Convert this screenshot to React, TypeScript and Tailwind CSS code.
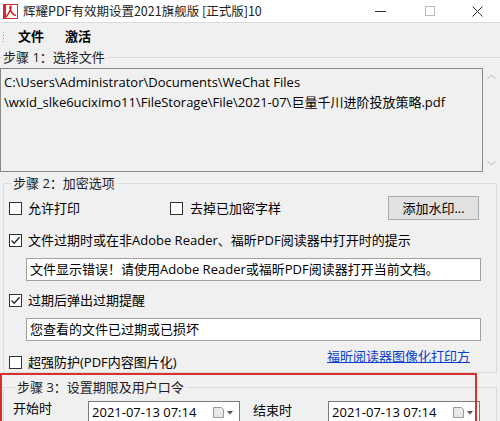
import { useState } from 'react';

function CheckBox({ checked, onChange }: { checked: boolean; onChange: () => void }) {
  return (
    <button
      type="button"
      onClick={onChange}
      className="w-[13px] h-[13px] shrink-0 border border-[#333] bg-white flex items-center justify-center"
    >
      {checked && (
        <svg width="11" height="11" viewBox="0 0 11 11">
          <path d="M1.5 5.5 L4.2 8.2 L9.5 2.2" fill="none" stroke="#222" strokeWidth="1.3" />
        </svg>
      )}
    </button>
  );
}

function DatePicker({ value }: { value: string }) {
  return (
    <div className="w-[152px] h-[23px] bg-white border border-[#7a7a7a] flex items-center pl-[3px] pr-[5px]">
      <span className="flex-1 text-[13px] leading-[15px] text-black">{value}</span>
      <svg width="22" height="13" viewBox="0 0 22 13">
        <path d="M1.5 1.5 H9.5 L11.5 3.5 V11.5 H1.5 Z" fill="#e8e8e8" stroke="#9a9a9a" />
        <path d="M15 5 L21 5 L18 8.5 Z" fill="#555" />
      </svg>
    </div>
  );
}

export default function App() {
  const [allowPrint, setAllowPrint] = useState(false);
  const [removeMark, setRemoveMark] = useState(false);
  const [tipOn, setTipOn] = useState(true);
  const [expireOn, setExpireOn] = useState(true);
  const [strong, setStrong] = useState(false);

  return (
    <div className="w-[500px] h-[421px] overflow-hidden relative bg-[#f0f0f0] text-black font-['Open_Sans','Noto_Sans_CJK_SC',sans-serif] text-[13px]">
      {/* title bar */}
      <div className="h-[23px] bg-white border-b border-[#dadada] flex items-center">
        <svg width="15" height="15" viewBox="0 0 15 15" className="ml-[3px]">
          <rect x="0.5" y="0.5" width="14" height="14" fill="#fff" stroke="#d42a2a" />
          <rect x="0" y="0" width="3" height="15" fill="#d42a2a" />
          <path d="M3 13 C6 9 8 5 8 3 C8 1.5 6.5 2 7 4.5 C7.5 7.5 10 11 13 11.5" fill="none" stroke="#d42a2a" strokeWidth="1.6" />
        </svg>
        <span className="ml-[5px] font-['Noto_Sans_CJK_SC',sans-serif] text-[12.5px] leading-[16px] text-[#222]">辉耀PDF有效期设置2021旗舰版 [正式版]10</span>
        <div className="ml-auto flex items-center h-full">
          <div className="w-[52px] flex justify-center">
            <div className="w-[11px] h-px bg-[#333]" />
          </div>
          <div className="w-[48px] flex justify-center">
            <div className="w-[10px] h-[10px] border border-[#bbb]" />
          </div>
          <div className="w-[46px] flex justify-center">
            <svg width="11" height="11" viewBox="0 0 11 11">
              <path d="M0.5 0.5 L10.5 10.5 M10.5 0.5 L0.5 10.5" stroke="#333" strokeWidth="1" />
            </svg>
          </div>
        </div>
      </div>

      {/* menu bar */}
      <div className="h-[27px] flex items-center">
        <div className="ml-[3px] flex flex-col gap-[2px]">
          <div className="w-px h-px bg-[#999]" />
          <div className="w-px h-px bg-[#999]" />
          <div className="w-px h-px bg-[#999]" />
          <div className="w-px h-px bg-[#999]" />
        </div>
        <span className="ml-[14px] font-bold text-[13px] leading-[15px]">文件</span>
        <span className="ml-[21px] font-bold text-[13px] leading-[15px]">激活</span>
      </div>

      {/* step 1 */}
      <fieldset className="border-t border-[#dcdcdc]">
        <legend className="ml-[3px] pr-[2px] leading-[14px] text-[#222]">步骤 1：选择文件</legend>
        <div className="mt-[4px] flex h-[104px]">
          <div className="w-[483px] border border-[#8a8a8a] px-[3px] pt-[3px] leading-[20px]">
            <div>C:\Users\Administrator\Documents\WeChat Files</div>
            <div>\wxid_slke6uciximo11\FileStorage\File\2021-07\巨量千川进阶投放策略.pdf</div>
          </div>
          <div className="flex-1 flex flex-col items-center justify-between py-[6px]">
            <svg width="9" height="6" viewBox="0 0 9 6">
              <path d="M0.5 5 L4.5 1 L8.5 5" fill="none" stroke="#b5b5b5" />
            </svg>
            <svg width="9" height="6" viewBox="0 0 9 6">
              <path d="M0.5 1 L4.5 5 L8.5 1" fill="none" stroke="#b5b5b5" />
            </svg>
          </div>
        </div>
      </fieldset>

      {/* step 2 */}
      <fieldset className="mt-[4px] mx-[3px] border border-[#dcdcdc] px-[5px] pb-[2px]">
        <legend className="ml-[2px] px-[2px] leading-[14px] text-[#222]">步骤 2：加密选项</legend>
        <div className="mt-[6px] h-[24px] flex items-center">
          <CheckBox checked={allowPrint} onChange={() => setAllowPrint(!allowPrint)} />
          <span className="ml-[6px] leading-[15px]">允许打印</span>
          <div className="ml-[90px] flex items-center">
            <CheckBox checked={removeMark} onChange={() => setRemoveMark(!removeMark)} />
            <span className="ml-[7px] leading-[15px]">去掉已加密字样</span>
          </div>
          <button
            type="button"
            className="ml-auto mr-[12px] w-[91px] h-[24px] bg-[#e1e1e1] border border-[#adadad] text-[13px] leading-[15px]"
          >
            添加水印...
          </button>
        </div>
        <div className="mt-[12px] h-[16px] flex items-center">
          <CheckBox checked={tipOn} onChange={() => setTipOn(!tipOn)} />
          <span className="ml-[6px] leading-[15px]">文件过期时或在非Adobe Reader、福昕PDF阅读器中打开时的提示</span>
        </div>
        <div className="mt-[10px] ml-[17px] w-[455px] h-[23px] bg-white border border-[#a0a0a0] flex items-center px-[3px] leading-[15px]">
          文件显示错误！请使用Adobe Reader或福昕PDF阅读器打开当前文档。
        </div>
        <div className="mt-[11px] h-[16px] flex items-center">
          <CheckBox checked={expireOn} onChange={() => setExpireOn(!expireOn)} />
          <span className="ml-[6px] leading-[15px]">过期后弹出过期提醒</span>
        </div>
        <div className="mt-[10px] ml-[17px] w-[455px] h-[23px] bg-white border border-[#a0a0a0] flex items-center px-[3px] leading-[15px]">
          您查看的文件已过期或已损坏
        </div>
        <div className="mt-[13px] h-[16px] flex items-center">
          <CheckBox checked={strong} onChange={() => setStrong(!strong)} />
          <span className="ml-[6px] leading-[15px]">超强防护(PDF内容图片化)</span>
          <a href="#" className="ml-auto mr-[21px] -mt-[12px] text-[#0a3fcc] underline leading-[15px]">
            福昕阅读器图像化打印方
          </a>
        </div>
      </fieldset>

      {/* step 3 */}
      <fieldset className="mt-[7px] mx-[3px] border border-[#dcdcdc] px-[9px]">
        <legend className="ml-[2px] px-[2px] leading-[14px] text-[#222]">步骤 3：设置期限及用户口令</legend>
        <div className="mt-[7px] flex items-start">
          <span className="leading-[15px]">开始时</span>
          <div className="ml-[36px]">
            <DatePicker value="2021-07-13 07:14" />
          </div>
          <span className="ml-[13px] mt-[2px] leading-[15px]">结束时</span>
          <div className="ml-[36px]">
            <DatePicker value="2021-07-13 07:14" />
          </div>
        </div>
      </fieldset>

      {/* red annotation frame */}
      <div className="absolute left-0 top-[373px] w-[477px] h-[60px] border-2 border-[#d8302f] pointer-events-none" />
    </div>
  );
}
